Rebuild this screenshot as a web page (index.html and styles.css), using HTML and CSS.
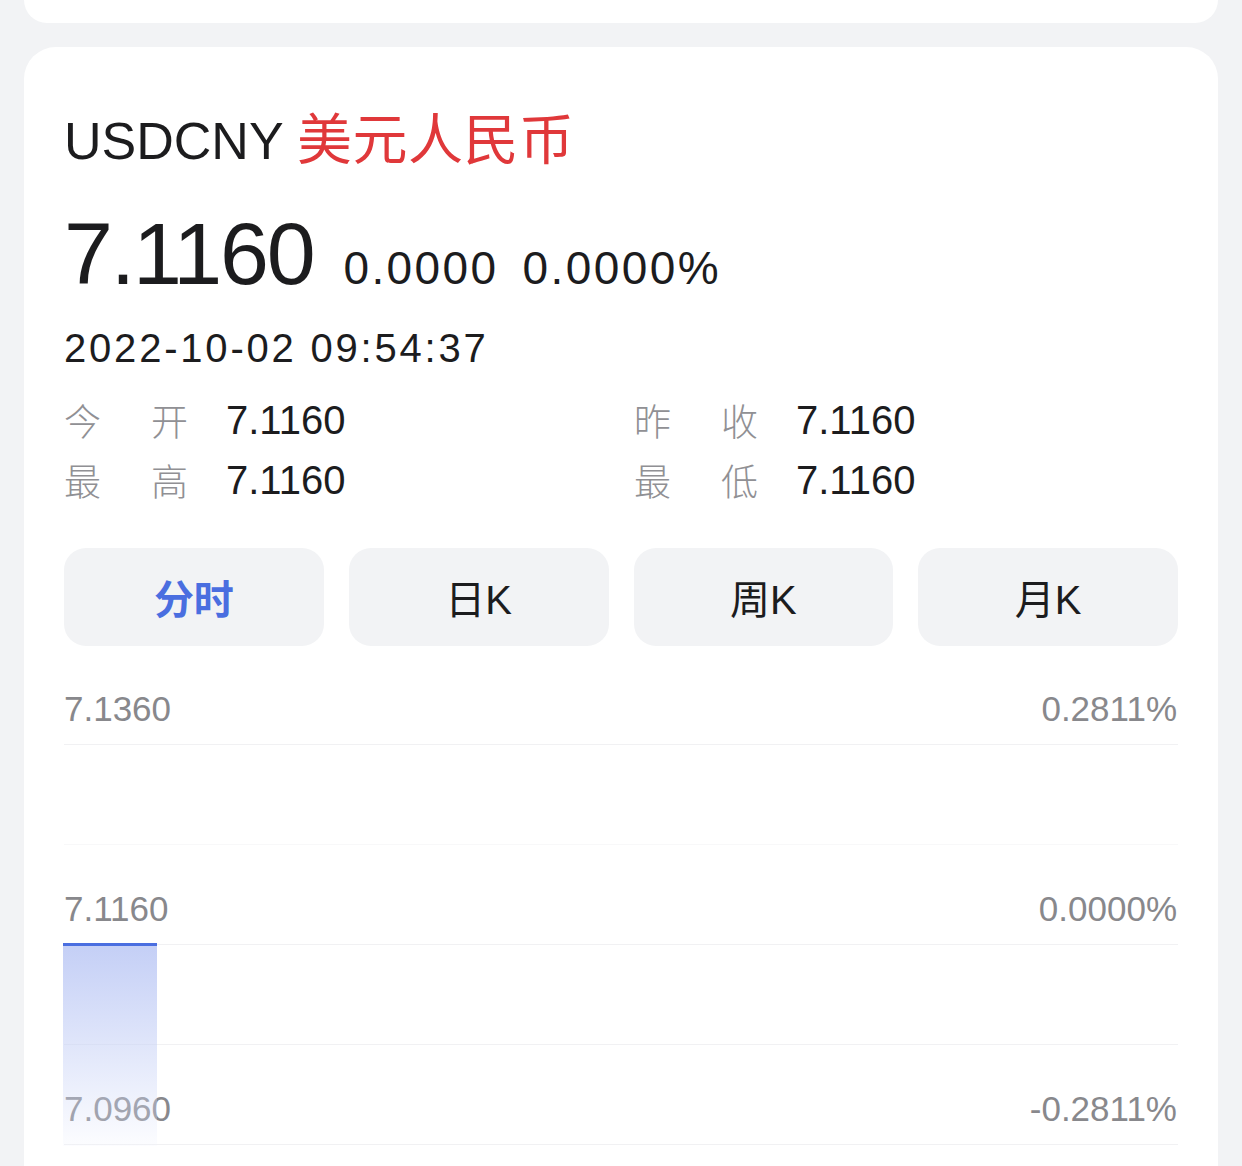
FILE: index.html
```html
<!DOCTYPE html>
<html lang="zh-CN">
<head>
    <meta charset="UTF-8">
    <meta name="viewport" content="width=device-width, initial-scale=1.0">
    <title>USDCNY 美元人民币</title>
    <link rel="stylesheet" href="styles.css">
</head>
<body>
    <div class="card-prev"></div>

    <div class="card">
        <h1 class="title">USDCNY <span class="title-cn">美元人民币</span></h1>

        <div class="price-row">
            <span class="price">7.1160</span>
            <span class="change">0.0000</span>
            <span class="change">0.0000%</span>
        </div>

        <div class="time">2022-10-02 09:54:37</div>

        <ul class="stats">
            <li><span class="stat-label"><i>今</i><i>开</i></span><span class="stat-value">7.1160</span></li>
            <li><span class="stat-label"><i>昨</i><i>收</i></span><span class="stat-value">7.1160</span></li>
            <li><span class="stat-label"><i>最</i><i>高</i></span><span class="stat-value">7.1160</span></li>
            <li><span class="stat-label"><i>最</i><i>低</i></span><span class="stat-value">7.1160</span></li>
        </ul>

        <div class="tabs">
            <button class="tab active">分时</button>
            <button class="tab">日K</button>
            <button class="tab">周K</button>
            <button class="tab">月K</button>
        </div>

        <div class="chart">
            <div class="band">
                <span>7.1360</span>
                <span>0.2811%</span>
            </div>
            <div class="band faint"></div>
            <div class="band">
                <span>7.1160</span>
                <span>0.0000%</span>
            </div>
            <div class="band"></div>
            <div class="band">
                <span>7.0960</span>
                <span>-0.2811%</span>
            </div>
            <div class="area"></div>
        </div>
    </div>
</body>
</html>
```

FILE: styles.css
```css
body {
    margin: 0;
    background-color: #f2f3f5;
    font-family: "Liberation Sans", Arial, "Noto Sans CJK SC", sans-serif;
    color: #1c1c1e;
}
.card-prev {
    height: 23px;
    margin: 0 24px;
    background-color: #fff;
    border-radius: 0 0 24px 24px;
}
.card {
    margin: 24px 24px 0;
    padding: 58px 40px 80px;
    background-color: #fff;
    border-radius: 32px;
}
.title {
    margin: 0;
    font-size: 52px;
    line-height: 60px;
    font-weight: normal;
}
.title-cn {
    font-family: "Noto Sans CJK SC", sans-serif;
    font-size: 55px;
    letter-spacing: 0.5px;
    color: #e0383a;
}
.price-row {
    display: flex;
    align-items: baseline;
    margin-top: 35px;
    line-height: 96px;
}
.price {
    font-size: 88px;
    letter-spacing: -2.2px;
    margin-right: 30px;
}
.change {
    font-size: 46px;
    letter-spacing: 2.4px;
    margin-right: 24px;
}
.time {
    margin-top: 8px;
    font-size: 40px;
    line-height: 48px;
    letter-spacing: 2.8px;
}
.stats {
    list-style: none;
    margin: 18px 0 0;
    padding: 0;
    display: grid;
    grid-template-columns: 1fr 1fr;
    column-gap: 26px;
}
.stats li {
    display: flex;
    align-items: center;
    height: 60px;
}
.stat-label {
    display: flex;
    justify-content: space-between;
    width: 124px;
    margin-right: 38px;
    font-family: "Noto Sans CJK SC", sans-serif;
    font-size: 37px;
    font-weight: 300;
    color: #909094;
}
.stat-label i {
    font-style: normal;
}
.stat-value {
    font-size: 40px;
}
.tabs {
    display: flex;
    gap: 25px;
    margin-top: 38px;
}
.tab {
    flex: 1;
    height: 98px;
    border: none;
    border-radius: 22px;
    background-color: #f2f3f5;
    font-family: "Liberation Sans", Arial, "Noto Sans CJK SC", sans-serif;
    font-size: 40px;
    color: #1c1c1e;
}
.tab.active {
    color: #4a6ee0;
    font-weight: bold;
}
.chart {
    position: relative;
}
.band {
    box-sizing: border-box;
    height: 100px;
    padding: 0 1px 15px 0;
    border-bottom: 1px solid #f1f1f3;
    display: flex;
    justify-content: space-between;
    align-items: flex-end;
    font-size: 35px;
    line-height: 40px;
    color: #88888c;
}
.band:first-child {
    height: 99px;
}
.band.faint {
    border-bottom-color: #f8f8f9;
}
.area {
    position: absolute;
    left: -1px;
    top: 297px;
    width: 94px;
    height: 200px;
    border-top: 3px solid #4a6ee0;
    background: linear-gradient(to bottom, rgba(190, 202, 245, 0.9), rgba(240, 243, 253, 0.2));
}
```
